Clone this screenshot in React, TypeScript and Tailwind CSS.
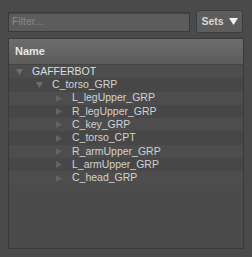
import React from 'react'

type Node = { label: string; depth: number; open?: boolean }

const ROWS: Node[] = [
  { label: 'GAFFERBOT', depth: 0, open: true },
  { label: 'C_torso_GRP', depth: 1, open: true },
  { label: 'L_legUpper_GRP', depth: 2 },
  { label: 'R_legUpper_GRP', depth: 2 },
  { label: 'C_key_GRP', depth: 2 },
  { label: 'C_torso_CPT', depth: 2 },
  { label: 'R_armUpper_GRP', depth: 2 },
  { label: 'L_armUpper_GRP', depth: 2 },
  { label: 'C_head_GRP', depth: 2 },
]

function Arrow({ open }: { open?: boolean }) {
  return open ? (
    <svg width="7" height="6" viewBox="0 0 7 6" className="shrink-0">
      <path d="M0 0 H7 L3.5 6 Z" fill="#6f6f6f" />
    </svg>
  ) : (
    <svg width="6" height="7" viewBox="0 0 6 7" className="shrink-0">
      <path d="M0 0 L6 3.5 L0 7 Z" fill="#646464" />
    </svg>
  )
}

export default function App() {
  return (
    <div
      className="w-[252px] h-[257px] bg-[#4a4a4a] px-[8px] pt-[10px] text-[10.5px]"
      style={{ fontFamily: '"Liberation Sans", Arial, sans-serif' }}
    >
      <div className="flex items-center h-[23px] gap-[6px]">
        <div className="h-[20px] w-[182px] border border-[#3a3a3a] bg-[#5c5c5c] shadow-[inset_0_1px_1px_rgba(0,0,0,0.25)] flex items-center px-[3px] text-[#878787]">
          Filter...
        </div>
        <button className="h-[23px] w-[47px] rounded-[3px] border border-[#3c3c3c] bg-[#5d5d5d] flex items-center justify-center gap-[5px] font-bold text-[#d6d6d6]">
          Sets
          <svg width="9" height="7" viewBox="0 0 9 7">
            <path d="M0 0 H9 L4.5 7 Z" fill="#f2f2f2" />
          </svg>
        </button>
      </div>

      <div className="mt-[5px] h-[211px] w-[236px] border border-[#3a3a3a] bg-[#4b4b4b] overflow-hidden">
        <div className="h-[26px] flex items-center px-[6px] bg-gradient-to-b from-[#6c6c6c] to-[#5c5c5c] border-b border-[#444] font-bold text-[#e6e6e6] text-[11px]">
          Name
        </div>
        {ROWS.map((r, i) => (
          <div
            key={r.label}
            className={`h-[13.3px] flex items-center ${i % 2 === 0 ? 'bg-[#4d4d4d]' : 'bg-[#474747]'}`}
          >
            <div className="flex items-center" style={{ paddingLeft: 7 + r.depth * 20 }}>
              <div className="w-[16px] flex items-center">
                <Arrow open={r.open} />
              </div>
              <span className={r.depth === 0 ? 'text-[#dedede]' : 'text-[#d2d2d2]'}>{r.label}</span>
            </div>
          </div>
        ))}
      </div>
    </div>
  )
}
